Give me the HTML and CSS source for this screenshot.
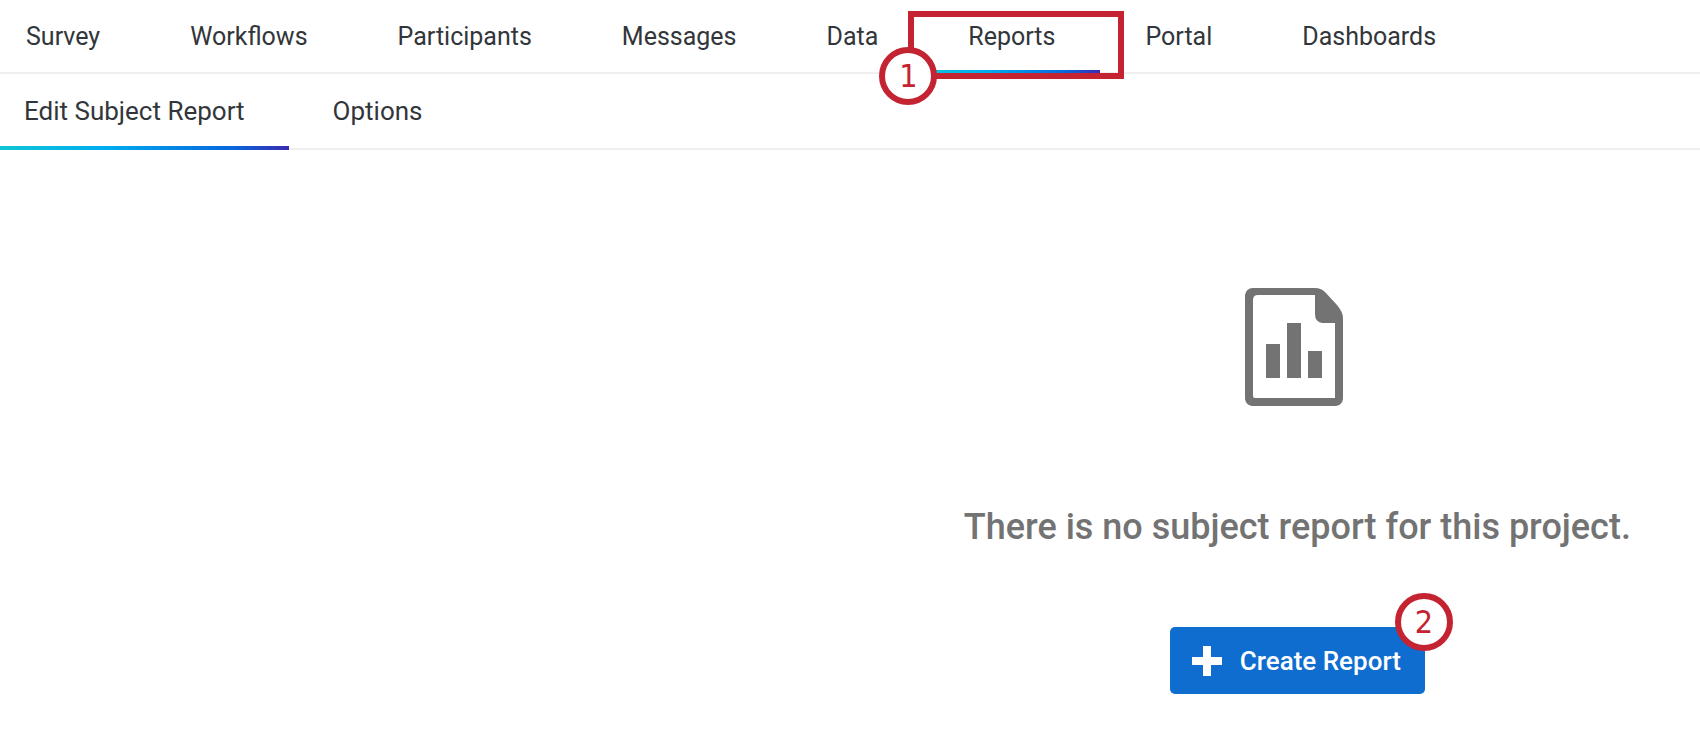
FILE: index.html
```
<!DOCTYPE html>
<html lang="en">
<head>
<meta charset="utf-8">
<title>Reports</title>
<link rel="stylesheet" href="styles.css">
</head>
<body>
<nav class="tabs tabs-main" aria-label="Project">
  <a class="tab" href="#">Survey</a>
  <a class="tab" href="#">Workflows</a>
  <a class="tab" href="#">Participants</a>
  <a class="tab" href="#">Messages</a>
  <a class="tab" href="#">Data</a>
  <a class="tab tab-active" href="#" aria-current="page">Reports<span class="highlight"><span class="step step-tab">1</span></span></a>
  <a class="tab" href="#">Portal</a>
  <a class="tab" href="#">Dashboards</a>
</nav>
<nav class="tabs tabs-sub" aria-label="Reports">
  <a class="tab tab-active" href="#" aria-current="page">Edit Subject Report</a>
  <a class="tab" href="#">Options</a>
</nav>
<main class="content">
  <section class="empty">
    <svg class="empty-icon" viewBox="0 0 104 118" aria-hidden="true">
      <path fill="#737373" fill-rule="evenodd" d="M7 0H70Q76 0 80 4L92 17Q98 24 98 30V111Q97 117 91 118H7Q1 117 0 111V7Q1 1 7 0ZM13 7Q8 7 8 12V108Q8 110 10 110H90V35H77Q70 34 70 26V7Z"/>
      <path fill="#737373" d="M21 56h14v34H21zM42 35h14v55H42zM63 63h14v27H63z"/>
    </svg>
    <h1 class="empty-title">There is no subject report for this project.</h1>
    <button class="create" type="button">
      <svg class="plus" viewBox="0 0 30 30" aria-hidden="true"><path fill="#fff" d="M11 0h8v11h11v8H19v11h-8V19H0v-8h11z"/></svg>
      Create Report
      <span class="step step-button">2</span>
    </button>
  </section>
</main>
</body>
</html>
```
FILE: styles.css
```
* { box-sizing: border-box; }
body {
  margin: 0;
  background: #fff;
  color: #32363a;
  font-family: Roboto, "Liberation Sans", sans-serif;
}
.tabs {
  display: flex;
  border-bottom: 2px solid #efefef;
}
.tab {
  position: relative;
  padding: 21px 45px 19px;
  font-size: 25px;
  line-height: 32px;
  color: inherit;
  text-decoration: none;
  white-space: nowrap;
}
.tabs-sub .tab {
  padding: 21px 44px 21px;
  font-size: 26px;
}
.tabs-main .tab:first-child { padding-left: 26px; }
.tabs-sub .tab:first-child { padding-left: 24px; }
.tab-active::after {
  content: "";
  position: absolute;
  left: 0;
  right: 0;
  bottom: -2px;
  height: 4px;
  background: linear-gradient(90deg, #10c5d5, #00aeef 35%, #0768dd 80%, #3a2bb0);
}
.highlight {
  position: absolute;
  z-index: 1;
  top: 11px;
  bottom: -7px;
  left: -15px;
  right: -24px;
  border: 6px solid #c42432;
}
.step {
  position: absolute;
  width: 58px;
  height: 58px;
  border: 6px solid #c42432;
  border-radius: 50%;
  background: #fff;
  color: #c42432;
  font: 32px/46px "DejaVu Sans Condensed", "DejaVu Sans", sans-serif;
  text-align: center;
}
.step-tab { left: -35px; bottom: -32px; }
.step-button { right: -28px; top: -34px; }
.content {
  display: grid;
  grid-template-columns: 10fr 9fr;
}
.empty {
  grid-column: 2;
  display: flex;
  flex-direction: column;
  align-items: center;
  padding: 138px 0 54px;
}
.empty-icon { width: 104px; height: 118px; }
.empty-title {
  margin: 97px 0 76px;
  color: #737373;
  font-size: 36px;
  line-height: 48px;
  font-weight: 500;
  white-space: nowrap;
}
.create {
  position: relative;
  display: flex;
  align-items: center;
  gap: 18px;
  height: 67px;
  padding: 0 24px 0 22px;
  border: 0;
  border-radius: 5px;
  background: #0f6dd0;
  color: #fff;
  font: 500 26px/32px Roboto, "Liberation Sans", sans-serif;
}
.plus { width: 30px; height: 30px; }
```
